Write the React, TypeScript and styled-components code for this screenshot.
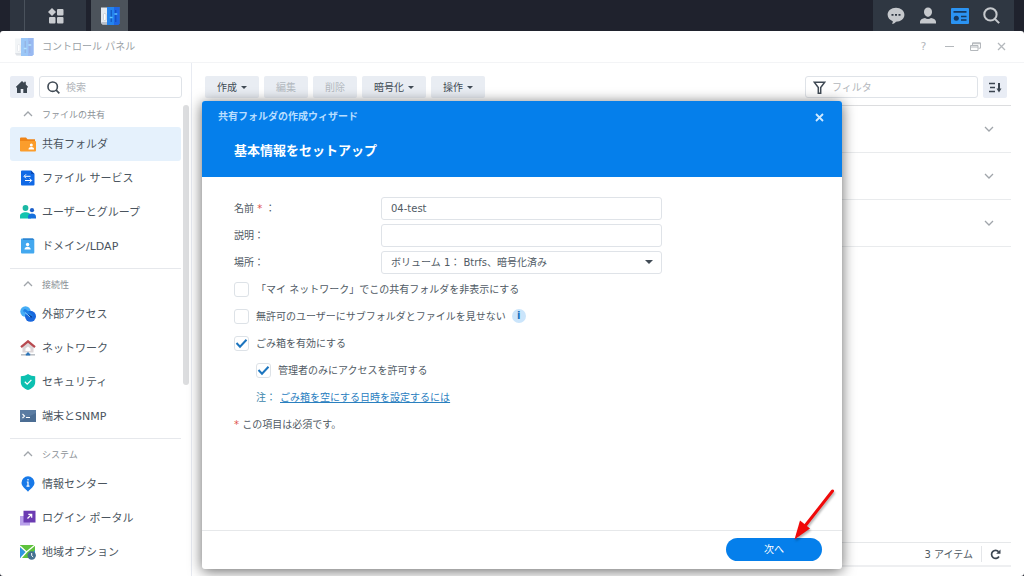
import React, { useState } from "react";
import styled, { createGlobalStyle } from "styled-components";

const GlobalStyle = createGlobalStyle`
  * { box-sizing: border-box; }
  body {
    margin: 0;
    background: #1f222d;
    color: #505a64;
    font-family: "DejaVu Sans", "Noto Sans CJK JP", sans-serif;
    font-size: 10px;
    line-height: 16px;
  }
  button, input, select { font: inherit; color: inherit; margin: 0; }
  button { border: 0; padding: 0; background: none; display: flex; align-items: center; justify-content: center; }
  svg { display: block; flex: none; }
  ul { margin: 0; padding: 0; list-style: none; }
  h1, h2, h3, p { margin: 0; }
`;

/* Centres Japanese glyphs optically beside icons and boxes */
const Text = styled.span`
  padding-top: 2px;
`;

/* Desktop */
const Desktop = styled.div`
  position: relative;
  display: flex;
  flex-direction: column;
  height: 100vh;
  overflow: hidden;
`;

const Taskbar = styled.header`
  display: flex;
  justify-content: space-between;
  flex: none;
  height: 31px;
  padding: 0 10px;
`;

const TaskGroup = styled.div`
  display: flex;
  gap: 5px;
`;

const MenuBlock = styled.div`
  display: flex;
  width: 76px;
  padding-left: 14px;
  background: #2e3540;
`;

const MenuButton = styled.button`
  flex: 1;
  border-left: 1px solid #4a525c;
`;

const TaskButton = styled.button`
  width: 37px;
  background: #4c535b;
`;

const Tray = styled.div`
  display: flex;
  align-items: center;
  justify-content: center;
  gap: 14px;
  padding: 0 14px;
  background: #2f3742;
`;

/* Window frame */
const Window = styled.section`
  display: flex;
  flex-direction: column;
  flex: 1;
  min-height: 0;
  background: #fff;
  border-radius: 3px;
  overflow: hidden;
`;

const TitleBar = styled.div`
  display: flex;
  align-items: center;
  gap: 8px;
  flex: none;
  height: 32px;
  padding: 0 16px 0 14px;
  border-bottom: 1px solid #f3f4f6;
`;

const WindowTitle = styled.h1`
  flex: 1;
  padding-top: 1px;
  font-size: 10px;
  font-weight: 400;
  color: #9a9fa5;
`;

const WindowTools = styled.div`
  display: flex;
  gap: 13px;
`;

const ToolButton = styled.button`
  width: 13px;
  height: 13px;
  font-size: 11px;
  color: #b4b8bc;
`;

const WindowBody = styled.div`
  display: flex;
  flex: 1;
  min-height: 0;
`;

/* Sidebar */
const Sidebar = styled.aside`
  display: flex;
  flex-direction: column;
  flex: none;
  width: 192px;
  border-right: 1px solid #e8ebf2;
`;

const SidebarTop = styled.div`
  display: flex;
  gap: 5px;
  padding: 13px 9px 1px 10px;
`;

const SquareButton = styled.button`
  width: 24px;
  height: 22px;
  border-radius: 2px;
  background: #e9edf5;
`;

const SearchBox = styled.label<{ $width?: number }>`
  display: flex;
  align-items: center;
  gap: 6px;
  height: 22px;
  padding: 0 7px;
  border: 1px solid #dfe3e8;
  border-radius: 3px;
  ${(p) => (p.$width ? `width: ${p.$width}px;` : "flex: 1; min-width: 0;")}
`;

const SearchInput = styled.input`
  flex: 1;
  min-width: 0;
  padding: 2px 0 0;
  border: 0;
  outline: 0;
  background: none;
  &::placeholder { color: #b2b6bb; opacity: 1; }
`;

const SidebarScroll = styled.div`
  display: flex;
  flex: 1;
  min-height: 0;
  padding: 0 2px 0 10px;
  overflow: hidden;
`;

const NavList = styled.nav`
  flex: 1;
`;

const ScrollThumb = styled.div`
  width: 6px;
  height: 280px;
  margin: 6px 0 0 2px;
  border-radius: 3px;
  background: #dcdddf;
`;

const NavGroup = styled.section`
  padding-bottom: 5px;
  & + & { border-top: 1px solid #e6e8ec; }
`;

const GroupTitle = styled.h2`
  display: flex;
  align-items: center;
  gap: 9px;
  height: 28px;
  padding: 2px 0 0 13px;
  font-size: 9px;
  font-weight: 400;
  color: #8b9197;
`;

const NavItem = styled.a<{ $active?: boolean }>`
  display: flex;
  align-items: center;
  gap: 6px;
  height: 34px;
  padding-left: 10px;
  border-radius: 3px;
  font-size: 11px;
  color: #4a545e;
  text-decoration: none;
  background: ${(p) => (p.$active ? "#e5f1fc" : "transparent")};
`;

/* Main pane */
const Main = styled.main`
  display: flex;
  flex-direction: column;
  flex: 1;
  min-width: 0;
  padding: 13px 13px 9px;
`;

const Toolbar = styled.div`
  display: flex;
  gap: 5px;
  padding: 0 4px 7px 0;
`;

const Spacer = styled.div`
  flex: 1;
`;

const ActionButton = styled.button`
  gap: 4px;
  height: 22px;
  padding: 0 12px;
  border-radius: 2px;
  background: #e9edf3;
  color: #414b55;
  &:disabled { color: #b3b9c0; }
`;

const FolderList = styled.ul`
  flex: 1;
  border-top: 1px solid #dcdddf;
`;

const FolderRow = styled.li`
  display: flex;
  align-items: center;
  justify-content: flex-end;
  height: 47px;
  padding-right: 17px;
  border-bottom: 1px solid #e9ebed;
`;

const StatusBar = styled.footer`
  display: flex;
  align-items: center;
  justify-content: flex-end;
  gap: 8px;
  height: 25px;
  padding-right: 10px;
  border-top: 1px solid #e6e8ea;
  border-bottom: 2px solid #eeeff1;
`;

const StatusDivider = styled.span`
  width: 1px;
  height: 16px;
  background: #e4e6e9;
`;

/* Wizard dialog */
const Dialog = styled.section`
  position: absolute;
  top: 101px;
  left: 202px;
  display: flex;
  flex-direction: column;
  width: 640px;
  min-height: 468px;
  background: #fff;
  border-radius: 3px;
  box-shadow: 0 2px 14px rgba(0, 0, 0, 0.6);
`;

const DialogHeader = styled.header`
  height: 76px;
  padding: 8px 16px;
  border-radius: 3px 3px 0 0;
  background: #057feb;
  color: #fff;
`;

const DialogCaption = styled.div`
  display: flex;
  align-items: center;
  justify-content: space-between;
  font-weight: 700;
  color: #b9deff;
`;

const StepTitle = styled.h2`
  padding: 16px 16px 0;
  font-size: 13px;
  line-height: 20px;
  font-weight: 700;
`;

const Form = styled.form`
  display: flex;
  flex-direction: column;
  gap: 5px;
  flex: 1;
  padding: 20px 32px;
`;

const FieldRow = styled.div`
  display: flex;
  align-items: center;
  height: 22px;
`;

const FieldLabel = styled.label`
  width: 147px;
  padding-top: 2px;
`;

const Required = styled.span`
  color: #e0524d;
`;

const FieldBox = styled.div`
  display: flex;
  align-items: center;
  width: 281px;
  height: 23px;
  padding-right: 8px;
  border: 1px solid #dfe3e8;
  border-radius: 3px;
`;

const TextInput = styled.input`
  flex: 1;
  min-width: 0;
  padding: 2px 9px 0;
  border: 0;
  outline: 0;
  background: none;
`;

const Select = styled.select`
  flex: 1;
  min-width: 0;
  padding: 2px 9px 0;
  border: 0;
  outline: 0;
  background: none;
  appearance: none;
`;

const CheckLabel = styled.label<{ $nested?: boolean }>`
  display: flex;
  align-items: center;
  gap: 7px;
  padding-left: ${(p) => (p.$nested ? 22 : 0)}px;
`;

const CheckHolder = styled.span`
  display: grid;
  place-items: center;
  & > * { grid-area: 1 / 1; pointer-events: none; }
`;

const CheckInput = styled.input`
  && { pointer-events: auto; }
  appearance: none;
  width: 15px;
  height: 15px;
  border: 1px solid #dde2e7;
  border-radius: 3px;
`;

const InfoBadge = styled.button`
  width: 14px;
  height: 14px;
  margin-left: 6px;
  border-radius: 50%;
  background: #cbe5fb;
  color: #1672bd;
  font-weight: 700;
`;

const Note = styled.p`
  display: flex;
  gap: 4px;
  padding: 2px 0 0 22px;
  color: #3b86ab;
`;

const NoteLink = styled.a`
  color: #2a80bf;
  text-underline-offset: 1px;
`;

const DialogFooter = styled.footer`
  display: flex;
  justify-content: flex-end;
  padding: 7px 20px 8px;
  border-top: 1px solid #e6e8ea;
`;

const PrimaryButton = styled.button`
  width: 96px;
  height: 23px;
  border-radius: 12px;
  background: #057feb;
  color: #fff;
`;

const Pointer = styled.svg`
  position: absolute;
  top: 484px;
  left: 788px;
  pointer-events: none;
  filter: drop-shadow(1px 2px 1px rgba(0, 0, 0, 0.3));
`;

/* Icons */
const ControlPanelIcon = ({ size, faded }: { size: number; faded?: boolean }) => (
  <svg width={size} height={size} viewBox="0 0 20 20" opacity={faded ? 0.45 : 1}>
    <path d="M1 1.500h7v17H2.500L1 17z" fill="#e4e9ef" />
    <path d="M1 16h7v2.500H2.500z" fill="#b8c0cc" />
    <path d="M7 1h12.500v16.500L18 19H7z" fill="#2484ee" />
    <path d="M14 1h5.500v16.500L18 19h-4z" fill="#1f66e4" />
    <rect x="3.500" y="7.500" width="2.500" height="7" rx="1.200" fill="#fff" stroke="#aab4c0" strokeWidth=".5" />
    <path d="M11.200 4v12M15.800 4v12" stroke="#0f4bb4" strokeWidth="1" />
    <path d="M9.800 11.500h2.800M14.400 8h2.800" stroke="#58c4ff" strokeWidth="1.500" />
  </svg>
);

const Caret = ({ w = 6 }: { w?: number }) => (
  <svg width={w} height={w / 2} viewBox="0 0 6 3">
    <path d="M0 0h6L3 3z" fill="#414b55" />
  </svg>
);

const Chevron = ({ up }: { up?: boolean }) => (
  <svg width="10" height="6" viewBox="0 0 10 6" fill="none" stroke="#a0a5aa" strokeWidth="1.300">
    <path d={up ? "M1 5l4-4 4 4" : "M1 1l4 4 4-4"} />
  </svg>
);

const Magnifier = ({ size, color, width }: { size: number; color: string; width: number }) => (
  <svg width={size} height={size} viewBox="0 0 16 16" fill="none" stroke={color} strokeWidth={width}>
    <circle cx="7" cy="7" r="5.800" />
    <path d="M11 11l4.200 4.200" />
  </svg>
);

const navIcons: Record<string, React.ReactNode> = {
  share: (
    <>
      <path d="M0 2.500A1 1 0 011 1.500h5l1.500 1.800H15V14a1 1 0 01-1 1H1a1 1 0 01-1-1z" fill="#ef8416" />
      <path d="M0 5h15a1 1 0 011 1v8.500a1 1 0 01-1 1H1a1 1 0 01-1-1z" fill="#fb9d2c" />
      <circle cx="11.300" cy="9" r="1.500" fill="#fff" />
      <path d="M8.500 13.500c0-3.200 5.600-3.200 5.600 0z" fill="#fff" />
    </>
  ),
  file: (
    <>
      <path d="M1 1.500A1 1 0 012 .5h9l3.500 3.500v10.500a1 1 0 01-1 1H2a1 1 0 01-1-1z" fill="#1069e6" />
      <path d="M11 .5L14.500 4H11z" fill="#0b4bb5" />
      <path d="M10.500 6.300H4.500M6 4.300l-2 2 2 2M5 10.500h6.500M9.700 8.500l2 2-2 2" fill="none" stroke="#fff" strokeWidth="1" />
    </>
  ),
  users: (
    <>
      <circle cx="5.500" cy="4" r="2.900" fill="#1bb8a4" />
      <path d="M0 14.500V12c0-5 11-5 11 0v2.500z" fill="#13c4ae" />
      <circle cx="12" cy="6.200" r="2.100" fill="#1c5fc9" />
      <path d="M8 14.500v-1.800c0-4.200 8-4.200 8 0v1.800z" fill="#1670dd" />
    </>
  ),
  domain: (
    <>
      <path d="M1 1.500A1 1 0 012 .5h11l1.300 1.300v12.700a1 1 0 01-1 1H2a1 1 0 01-1-1z" fill="#43a8ef" />
      <path d="M3 .5h10l1.300 1.300H3z" fill="#2579c8" />
      <circle cx="7.600" cy="6.500" r="1.700" fill="#fff" />
      <path d="M4.500 11.500c0-3.800 6.200-3.800 6.200 0z" fill="#fff" />
    </>
  ),
  external: (
    <>
      <circle cx="5.500" cy="5.500" r="5.200" fill="#45adf5" />
      <circle cx="10.500" cy="10.300" r="5.500" fill="#1967dd" />
      <path d="M5 4.800l6 5.200" stroke="#1d7fe6" strokeWidth="3.500" strokeLinecap="round" />
      <path d="M8 9l3.500 2" stroke="#0c3f9e" strokeWidth="1.500" strokeLinecap="round" />
      <path d="M5 6.500l4.500 4" stroke="#9bd6ff" strokeWidth="1" strokeLinecap="round" />
    </>
  ),
  network: (
    <>
      <path d="M2.500 6.500L8 2l5.500 4.500V12.500h-11z" fill="#dcd6d8" />
      <path d="M1 7.200L8 1.300l7 5.900" fill="none" stroke="#b84a50" strokeWidth="2.200" />
      <path d="M5.500 8.500L8 6.500l2.500 2V11h-5z" fill="#fff" />
      <path d="M1 14.800h14" stroke="#b9bec4" strokeWidth="1.500" />
      <path d="M5.800 14.600h4.400M8 12.500v2" stroke="#2b74b8" strokeWidth="2" />
    </>
  ),
  security: (
    <>
      <path d="M8 0c2.300 1.500 4.700 2.200 7.200 2.300V8c0 4-3 6.500-7.200 8C3.800 14.500.8 12 .8 8V2.300C3.300 2.200 5.700 1.500 8 0z" fill="#0cc0b0" />
      <path d="M4.800 7.800l2.400 2.400 4.200-4.300" fill="none" stroke="#fff" strokeWidth="1.300" />
    </>
  ),
  terminal: (
    <>
      <path d="M0 2h16v12H0z" fill="#4b6d93" />
      <path d="M0 2h16v3L0 13z" fill="#5a7ca2" />
      <path d="M2.500 6l2 2-2 2M6 9.500h4" fill="none" stroke="#fff" strokeWidth="1.100" />
    </>
  ),
  info: (
    <>
      <path d="M8 .3a6.500 6.500 0 016.500 6.500c0 3.700-3.800 5.700-6.500 9-2.700-3.300-6.500-5.300-6.500-9A6.500 6.500 0 018 .3z" fill="#1779e8" />
      <path d="M8 3v1.500M6.800 6H8v4M6.500 10.200h3" fill="none" stroke="#fff" strokeWidth="1.200" />
    </>
  ),
  portal: (
    <>
      <path d="M0 6h10v9.500H0z" fill="#b9a0ea" />
      <path d="M3.500.8h12V12.500h-12z" fill="#6b3bb2" />
      <path d="M7.500 8.500l4-4M8.300 4.300h3.400v3.400" fill="none" stroke="#fff" strokeWidth="1.200" />
    </>
  ),
  region: (
    <>
      <path d="M0 1h15v13H0z" fill="#5ec23c" />
      <path d="M0 3l6 5.500L1.500 14H0zM9 14l6-8v8z" fill="#2f96e2" />
      <path d="M0 2l6.500 6L15 1M6.500 8l-5.500 6" fill="none" stroke="#fff" strokeWidth="1.300" />
      <circle cx="11.700" cy="11.500" r="4.200" fill="#44708f" />
      <path d="M11.700 9v2.700l1.500 1.300" fill="none" stroke="#fff" strokeWidth="1" />
    </>
  ),
};

const navGroups = [
  {
    title: "ファイルの共有",
    items: [
      { icon: "share", label: "共有フォルダ", active: true },
      { icon: "file", label: "ファイル サービス" },
      { icon: "users", label: "ユーザーとグループ" },
      { icon: "domain", label: "ドメイン/LDAP" },
    ],
  },
  {
    title: "接続性",
    items: [
      { icon: "external", label: "外部アクセス" },
      { icon: "network", label: "ネットワーク" },
      { icon: "security", label: "セキュリティ" },
      { icon: "terminal", label: "端末とSNMP" },
    ],
  },
  {
    title: "システム",
    items: [
      { icon: "info", label: "情報センター" },
      { icon: "portal", label: "ログイン ポータル" },
      { icon: "region", label: "地域オプション" },
    ],
  },
];

const actions = [
  { label: "作成", menu: true },
  { label: "編集", disabled: true },
  { label: "削除", disabled: true },
  { label: "暗号化", menu: true },
  { label: "操作", menu: true },
];

function CheckOption({ label, initial = false, nested }: { label: string; initial?: boolean; nested?: boolean }) {
  const [checked, setChecked] = useState(initial);
  return (
    <CheckLabel $nested={nested}>
      <CheckHolder>
        <CheckInput type="checkbox" checked={checked} onChange={(e) => setChecked(e.target.checked)} />
        {checked && (
          <svg width="13" height="11" viewBox="0 0 13 11" fill="none" stroke="#1c75bf" strokeWidth="2">
            <path d="M1.500 5l3.500 3.700 6.500-7" />
          </svg>
        )}
      </CheckHolder>
      <Text>{label}</Text>
    </CheckLabel>
  );
}

export default function App() {
  const [name, setName] = useState("04-test");
  const [description, setDescription] = useState("");

  return (
    <Desktop>
      <GlobalStyle />
      <Taskbar>
        <TaskGroup>
          <MenuBlock>
            <MenuButton aria-label="メインメニュー">
              <svg width="16" height="16" viewBox="0 0 16 16" fill="#c9ccd0">
                <path d="M4 0l4 4-4 4-4-4z" />
                <rect x="9" y="1" width="6.500" height="6.500" rx="1" />
                <rect x="1" y="9" width="6.500" height="6.500" rx="1" />
                <rect x="9" y="9" width="6.500" height="6.500" rx="1" />
              </svg>
            </MenuButton>
          </MenuBlock>
          <TaskButton aria-label="コントロール パネル">
            <ControlPanelIcon size={20} />
          </TaskButton>
        </TaskGroup>
        <Tray>
          <button aria-label="チャット">
            <svg width="18" height="18" viewBox="0 0 18 18">
              <path d="M9 .8c4.800 0 8.400 3 8.400 7 0 4-3.600 6.900-8.400 6.900-.8 1.100-2.200 2-4 2.100.6-.8.9-1.700.8-2.600C2.700 13 .6 10.800.6 7.800.6 3.800 4.200.8 9 .8z" fill="#c6c9cd" />
              <path d="M4.500 7.800h2M8 7.800h2M11.500 7.800h2" stroke="#2f3742" strokeWidth="1.800" />
            </svg>
          </button>
          <button aria-label="ユーザー">
            <svg width="18" height="18" viewBox="0 0 18 18" fill="#c6c9cd">
              <path d="M9 .5c2.400 0 4 1.700 4 4.200 0 2.600-1.700 5-4 5s-4-2.400-4-5C5 2.200 6.600.5 9 .5z" />
              <path d="M1 16.500v-1.700c0-2 2.200-3.300 5-3.800 1.800 1.200 4.200 1.200 6 0 2.800.5 5 1.800 5 3.800v1.700z" />
            </svg>
          </button>
          <button aria-label="ウィジェット">
            <svg width="18" height="18" viewBox="0 0 18 18">
              <rect x="0" y="1" width="18" height="16" rx="1" fill="#2b93f2" />
              <path d="M2.500 4.800h13M10 9.500h5.500M10 13h5.500" stroke="#17385e" strokeWidth="1.700" />
              <circle cx="5.300" cy="11.200" r="2.500" fill="#17385e" />
            </svg>
          </button>
          <button aria-label="検索">
            <Magnifier size={17} color="#c6c9cd" width={1.9} />
          </button>
        </Tray>
      </Taskbar>

      <Window>
        <TitleBar>
          <ControlPanelIcon size={20} faded />
          <WindowTitle>コントロール パネル</WindowTitle>
          <WindowTools>
            <ToolButton aria-label="ヘルプ">?</ToolButton>
            <ToolButton aria-label="最小化">
              <svg width="9" height="9" viewBox="0 0 9 9" stroke="currentColor" strokeWidth="1.200"><path d="M0 4.500h9" /></svg>
            </ToolButton>
            <ToolButton aria-label="元に戻す">
              <svg width="11" height="9" viewBox="0 0 11 9" fill="none" stroke="currentColor">
                <path d="M.5 3.500h7.500v5H.5zM.5 5h7.500M2.500 3V.800h8v5.400H8.500M2.500 1.700h8" />
              </svg>
            </ToolButton>
            <ToolButton aria-label="閉じる">
              <svg width="9" height="9" viewBox="0 0 9 9" stroke="currentColor" strokeWidth="1.300"><path d="M1 1l7 7M8 1L1 8" /></svg>
            </ToolButton>
          </WindowTools>
        </TitleBar>

        <WindowBody>
          <Sidebar>
            <SidebarTop>
              <SquareButton aria-label="ホーム">
                <svg width="12" height="12" viewBox="0 0 12 12" fill="#3b4550">
                  <path d="M6 0l2.200 2V.800h1.600v2.700L12 5.700v.8h-1V12H7.300V8H4.700v4H1V6.500H0v-.8z" />
                </svg>
              </SquareButton>
              <SearchBox>
                <Magnifier size={13} color="#414b55" width={2} />
                <SearchInput type="search" placeholder="検索" aria-label="検索" />
              </SearchBox>
            </SidebarTop>
            <SidebarScroll>
              <NavList>
                {navGroups.map((group) => (
                  <NavGroup key={group.title}>
                    <GroupTitle><Chevron up /><Text>{group.title}</Text></GroupTitle>
                    {group.items.map((item) => (
                      <NavItem key={item.label} href="#" $active={"active" in item && item.active}>
                        <svg width="16" height="16" viewBox="0 0 16 16">{navIcons[item.icon]}</svg>
                        <Text>{item.label}</Text>
                      </NavItem>
                    ))}
                  </NavGroup>
                ))}
              </NavList>
              <ScrollThumb />
            </SidebarScroll>
          </Sidebar>

          <Main>
            <Toolbar>
              {actions.map((action) => (
                <ActionButton key={action.label} disabled={action.disabled}>
                  <Text>{action.label}</Text>
                  {action.menu && <Caret />}
                </ActionButton>
              ))}
              <Spacer />
              <SearchBox $width={173}>
                <svg width="13" height="13" viewBox="0 0 13 13" fill="none" stroke="#414b55" strokeWidth="1.500">
                  <path d="M1.300 1.300h10.400L7.700 6.500v5.700H5.300V6.500z" />
                </svg>
                <SearchInput placeholder="フィルタ" aria-label="フィルタ" />
              </SearchBox>
              <SquareButton aria-label="並べ替え">
                <svg width="13" height="11" viewBox="0 0 13 11" fill="none" stroke="#3b4550" strokeWidth="1.600">
                  <path d="M0 1.500h6M1 5.500h5M0 9.500h6" />
                  <path d="M10 1v6" strokeWidth="2" />
                  <path d="M7.500 6.500h5L10 10.500z" fill="#3b4550" stroke="none" />
                </svg>
              </SquareButton>
            </Toolbar>
            <FolderList>
              {[0, 1, 2].map((row) => (
                <FolderRow key={row}>
                  <button aria-label="詳細を表示"><Chevron /></button>
                </FolderRow>
              ))}
            </FolderList>
            <StatusBar>
              <Text>3 アイテム</Text>
              <StatusDivider />
              <button aria-label="更新">
                <svg width="11" height="11" viewBox="0 0 11 11" fill="none" stroke="#3b4550" strokeWidth="1.700">
                  <path d="M9 7.500A4 4 0 118.600 2.800" />
                  <path d="M10.500.5v4.300H6.200z" fill="#3b4550" stroke="none" />
                </svg>
              </button>
            </StatusBar>
          </Main>
        </WindowBody>
      </Window>

      <Dialog role="dialog" aria-labelledby="wizard-step">
        <DialogHeader>
          <DialogCaption>
            共有フォルダの作成ウィザード
            <ToolButton aria-label="ウィザードを閉じる">
              <svg width="9" height="9" viewBox="0 0 9 9" stroke="#cfe9ff" strokeWidth="1.800"><path d="M1 1l7 7M8 1L1 8" /></svg>
            </ToolButton>
          </DialogCaption>
          <StepTitle id="wizard-step">基本情報をセットアップ</StepTitle>
        </DialogHeader>
        <Form onSubmit={(e) => e.preventDefault()}>
          <FieldRow>
            <FieldLabel htmlFor="folder-name">名前 <Required>*</Required> ：</FieldLabel>
            <FieldBox>
              <TextInput id="folder-name" value={name} onChange={(e) => setName(e.target.value)} />
            </FieldBox>
          </FieldRow>
          <FieldRow>
            <FieldLabel htmlFor="folder-description">説明：</FieldLabel>
            <FieldBox>
              <TextInput id="folder-description" value={description} onChange={(e) => setDescription(e.target.value)} />
            </FieldBox>
          </FieldRow>
          <FieldRow>
            <FieldLabel htmlFor="folder-location">場所：</FieldLabel>
            <FieldBox>
              <Select id="folder-location">
                <option>ボリューム 1： Btrfs、暗号化済み</option>
              </Select>
              <Caret w={8} />
            </FieldBox>
          </FieldRow>
          <FieldRow><CheckOption label="「マイ ネットワーク」でこの共有フォルダを非表示にする" /></FieldRow>
          <FieldRow>
            <CheckOption label="無許可のユーザーにサブフォルダとファイルを見せない" />
            <InfoBadge type="button" aria-label="詳細情報">i</InfoBadge>
          </FieldRow>
          <FieldRow><CheckOption label="ごみ箱を有効にする" initial /></FieldRow>
          <FieldRow><CheckOption label="管理者のみにアクセスを許可する" initial nested /></FieldRow>
          <FieldRow>
            <Note>注： <NoteLink href="#">ごみ箱を空にする日時を設定するには</NoteLink></Note>
          </FieldRow>
          <FieldRow><Text><Required>*</Required> この項目は必須です。</Text></FieldRow>
        </Form>
        <DialogFooter>
          <PrimaryButton type="button">次へ</PrimaryButton>
        </DialogFooter>
      </Dialog>

      <Pointer width="50" height="62" viewBox="0 0 50 62">
        <path d="M44.500 7L17 42" stroke="#f00a0a" strokeWidth="3" strokeLinecap="round" />
        <path d="M6.500 55.500L12 36.500l10 8z" fill="#f00a0a" />
      </Pointer>
    </Desktop>
  );
}
